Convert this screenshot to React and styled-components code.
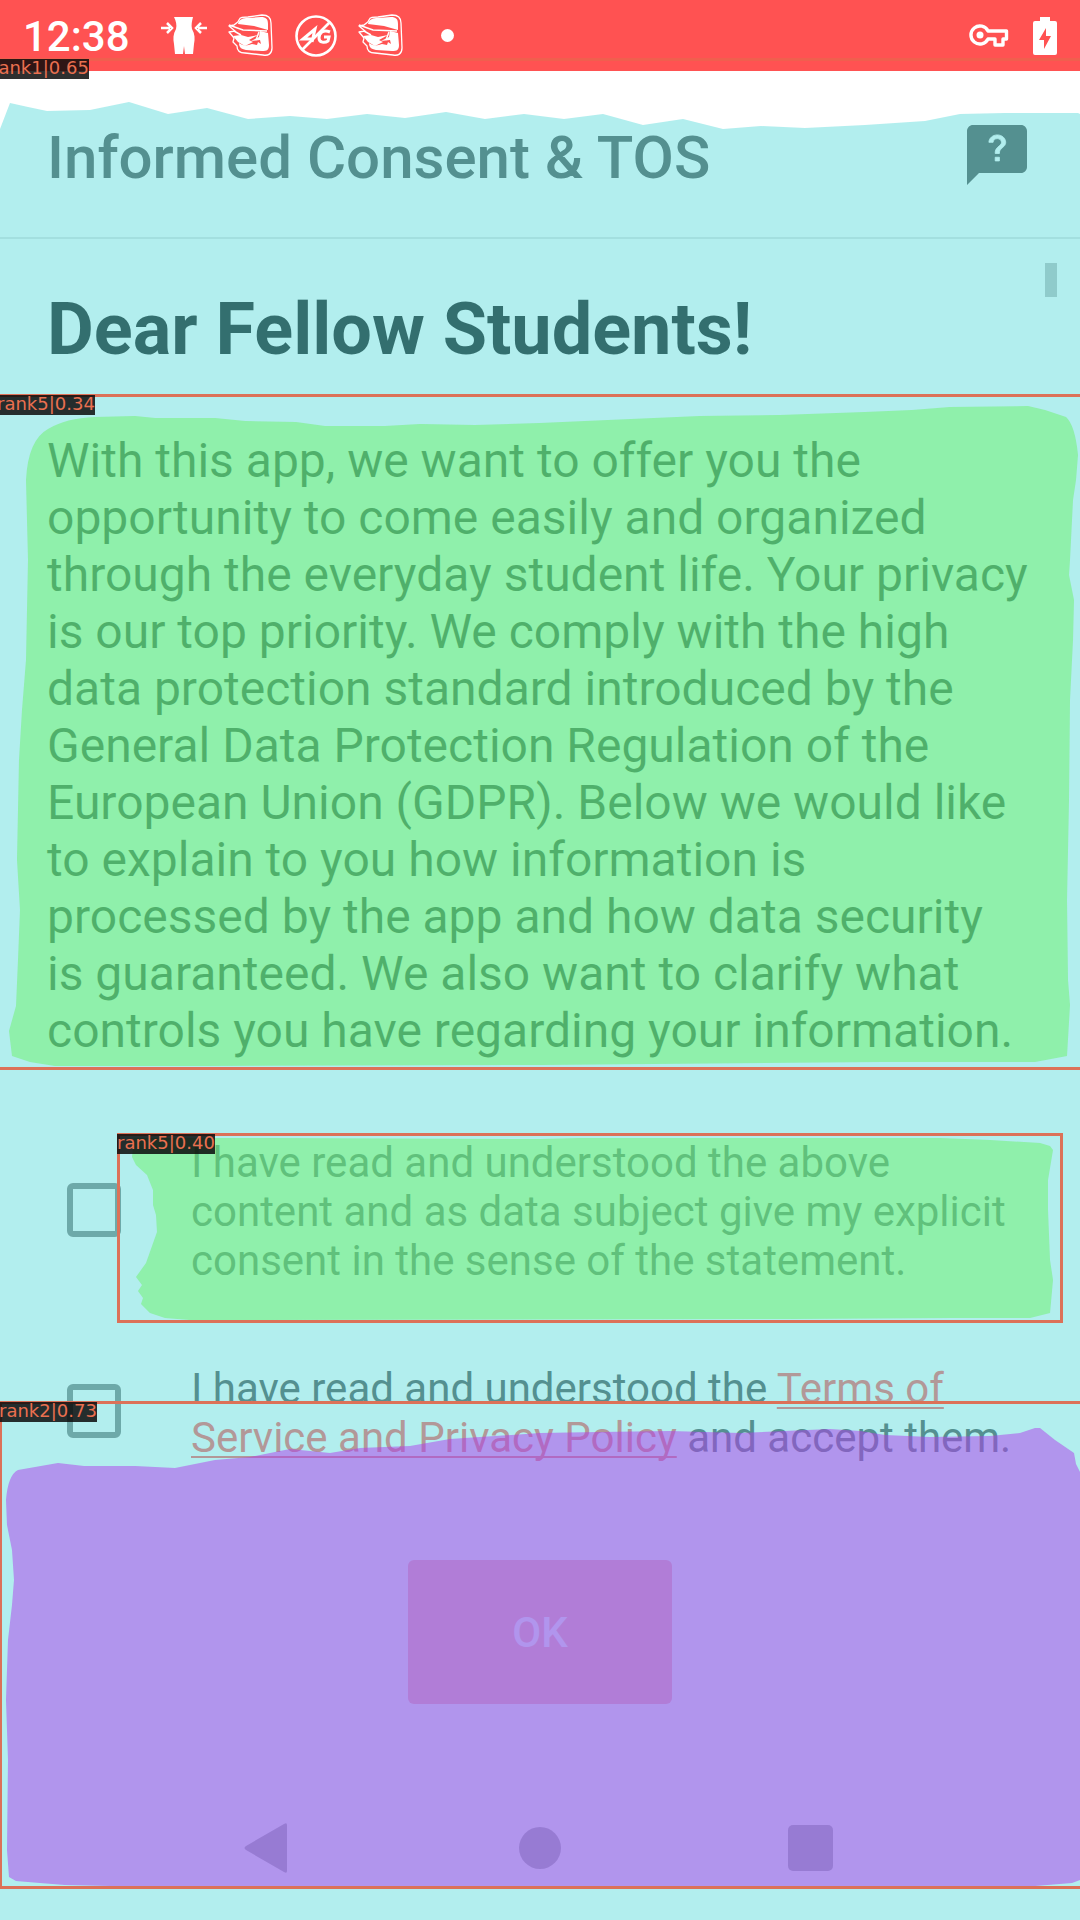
import React from "react";
import styled, { createGlobalStyle } from "styled-components";

const GlobalStyle = createGlobalStyle`
  *, *::before, *::after { box-sizing: border-box; }
  body {
    margin: 0;
    background: #ffffff;
    font-family: Roboto, "Liberation Sans", sans-serif;
  }
`;

const Screen = styled.div`
  position: relative;
  display: flex;
  flex-direction: column;
  min-height: 100vh;
  overflow: hidden;
  background: #ffffff;
`;

const StatusBar = styled.div`
  display: flex;
  align-items: center;
  justify-content: space-between;
  height: 71px;
  padding: 0 23px;
  background: #ff5252;
  color: #ffffff;
`;

const StatusGroup = styled.div`
  display: flex;
  align-items: center;
  gap: ${({ $gap }) => $gap}px;
`;

const Clock = styled.span`
  margin-right: 10px;
  padding-top: 2px;
  font-size: 42px;
  line-height: 48px;
  font-weight: 500;
`;

const MoreDot = styled.span`
  width: 13px;
  height: 13px;
  margin-left: 16px;
  border-radius: 50%;
  background: #ffffff;
`;

const Header = styled.header`
  display: flex;
  align-items: center;
  justify-content: space-between;
  height: 168px;
  padding: 2px 47px 0;
  border-bottom: 2px solid #e0e0e0;
`;

const Title = styled.h2`
  margin: 0;
  padding-top: 5px;
  font-size: 60px;
  line-height: 70px;
  font-weight: 500;
  color: #424242;
`;

const IconButton = styled.button`
  display: flex;
  padding: 0;
  border: 0;
  background: none;
  color: #424242;
`;

const Content = styled.main`
  position: relative;
  padding: 49px 47px 48px;
`;

const ScrollThumb = styled.div`
  position: absolute;
  top: 24px;
  right: 23px;
  width: 12px;
  height: 34px;
  background: #b8b8b8;
`;

const Greeting = styled.h1`
  margin: 0 0 60px;
  font-size: 72px;
  line-height: 84px;
  font-weight: 700;
  color: #000000;
`;

const Intro = styled.p`
  margin: 0 0 79px;
  padding-right: 4px;
  font-size: 48px;
  line-height: 57px;
  color: #000000;
`;

const Form = styled.form`
  display: flex;
  flex-direction: column;
  gap: 79px;
`;

const ConsentRow = styled.div`
  display: flex;
  align-items: center;
  gap: 70px;
  padding-left: 20px;
`;

const Checkbox = styled.input`
  appearance: none;
  flex: none;
  width: 54px;
  height: 54px;
  margin: 0 0 4px;
  border: 6px solid #757575;
  border-radius: 6px;
`;

const ConsentText = styled.label`
  flex: 1;
  font-size: 42px;
  line-height: 49px;
  color: #424242;
`;

const TermsLink = styled.a`
  color: #ff5252;
  text-decoration: underline;
  text-decoration-thickness: 2px;
  text-decoration-skip-ink: none;
  text-underline-offset: 4px;
`;

const SubmitButton = styled.button`
  align-self: center;
  margin-top: 19px;
  padding: 48px 104px 47px;
  border: 0;
  border-radius: 6px;
  background: #ff9fa6;
  color: #ffffff;
  font-family: inherit;
  font-size: 42px;
  line-height: 49px;
  font-weight: 500;
`;

const NavBar = styled.nav`
  display: flex;
  justify-content: center;
  gap: 120px;
  margin-top: auto;
`;

const NavButton = styled.button`
  display: flex;
  align-items: center;
  justify-content: center;
  width: 150px;
  height: 145px;
  padding: 0;
  border: 0;
  background: none;
  color: #999999;
`;

const Overlay = styled.div`
  position: absolute;
  inset: 0;
  pointer-events: none;
`;

const Masks = styled.svg`
  display: block;
  width: 100%;
  height: 100%;
`;

const Detection = styled.div`
  position: absolute;
  top: ${({ $top }) => $top}px;
  left: ${({ $left }) => $left}px;
  right: ${({ $right }) => $right}px;
  height: ${({ $height }) => $height}px;
  border: 3px solid ${({ $faint }) => ($faint ? "rgba(230, 105, 76, 0.6)" : "#dc7158")};
`;

const Tag = styled.span`
  position: absolute;
  top: -2px;
  left: -3px;
  height: 20px;
  background: rgba(10, 10, 10, 0.85);
  color: #ea7050;
  font-family: "DejaVu Sans", sans-serif;
  font-size: 18px;
  line-height: 18px;
  white-space: nowrap;
`;

const detections = [
  { tag: "rank1|0.65", top: 58, left: -9, right: -9, height: 1900, faint: true },
  { tag: "rank5|0.34", top: 394, left: -3, right: -3, height: 676 },
  { tag: "rank5|0.40", top: 1133, left: 117, right: 17, height: 190 },
  { tag: "rank2|0.73", top: 1401, left: -1, right: -3, height: 488 },
];

const masks = [
  {
    fill: "#66dedd",
    d: "M0 129L10 103L28 107L47 111L90 110L129 102L168 114L207 108L248 119L290 116L327 119L367 114L405 118L446 112L485 119L524 114L564 119L603 114L643 125L683 119L723 129L761 126L805 128L865 125L925 121L960 114L1005 113L1078 113L1080 114V1920H0Z",
  },
  {
    fill: "#6cf268",
    d: "M26 480Q28 440 48 429Q66 418 95 417L135 416L155 418L215 418L245 421L296 422L325 426L385 426L420 424L475 425L540 423L608 420L700 416L780 415L865 412L912 410L950 407L1028 406L1045 410L1066 417Q1075 425 1078 455L1076 480L1073 500L1070 560L1069 575L1074 600L1073 640L1070 700L1069 800L1067 900L1068 980L1070 1005L1067 1056L1035 1062L880 1062L540 1065L200 1066L55 1066L30 1062L12 1056L9 1031L16 1006L18 960L20 910L17 860L19 760L22 710L26 660L28 560Z",
  },
  {
    fill: "#6cf268",
    d: "M132 1157L134 1138H268L540 1139L580 1138H940L990 1140L1040 1143L1050 1146L1053 1150L1048 1180L1048 1210L1050 1260L1053 1280L1050 1313L1030 1318H950L790 1319L190 1320L165 1318L150 1313L141 1304L143 1298L138 1291L142 1285L136 1277L146 1263L157 1232L156 1215L153 1205V1190L147 1175L136 1165Z",
  },
  {
    fill: "#b03ceb",
    d: "M6 1500Q8 1475 18 1470L58 1463L84 1466H135L175 1468L215 1460L250 1457L290 1449L330 1453L360 1448L410 1446L450 1439L540 1433L600 1432L670 1431L740 1433L830 1429L860 1431L885 1435L930 1437L990 1436L1020 1433L1035 1428H1040L1055 1440L1074 1453L1076 1464L1080 1472V1880L1072 1883L1035 1886H110L65 1885L40 1883L16 1881L9 1877L7 1850L8 1760L6 1700L8 1640L12 1605L14 1580L12 1550L7 1525Z",
  },
];

const SlimBodyIcon = () => (
  <svg width="46" height="42" viewBox="0 0 46 42" fill="#fff" aria-hidden="true">
    <path d="M13 2h19c-1 4-2 8-1 12 3 5 3 10 2 15l-1 10h-8l-1-8-1 8h-8l-1-10c-1-5-1-10 2-15 1-4 0-8-2-12z" />
    <path d="M0 13h9M37 13h9M6 8l5 5-5 5M40 8l-5 5 5 5" fill="none" stroke="#fff" strokeWidth="2.500" />
  </svg>
);

const BirdIcon = () => (
  <svg width="46" height="44" viewBox="0 0 46 44" aria-hidden="true">
    <path
      d="M6 11c2-2 4-2 5-5s4-3 9-3l14-2c7 0 9 3 9 8l1 25c0 6-4 8-9 7l-18-2c-6 0-8-3-8-7l-4-4 1-4-5-6 6-1-6-5z"
      fill="none"
      stroke="#fff"
      strokeWidth="1.300"
      strokeLinejoin="round"
    />
    <path d="M10 10c1-5 5-6 10-6l13-1c5 0 7 2 7 7v6l-14-4z" fill="#fff" />
    <path
      d="M32 17l8 2 1 12c0 5-2 6-7 6l-16-1c-5-1-7-3-7-7 4 3 8 3 13 1l5 1 1-3 3 2-1-4-9 1 8-4z"
      fill="#fff"
    />
    <path d="M5 22l8-1 7 2 10-2-9 5 4 2-8 4-7-4z" fill="#fff" />
    <path d="M1 11l14 5 24 1M6 17l7 4M31 18l-3 8" fill="none" stroke="#fff" strokeWidth="1.500" />
  </svg>
);

const No4gIcon = () => (
  <svg width="42" height="44" viewBox="0 0 42 44" fill="none" stroke="#fff" aria-hidden="true">
    <circle cx="21" cy="22" r="19.500" strokeWidth="2.600" />
    <path d="M7 36L35 8" strokeWidth="2.600" />
    <path d="M17 28l3-13L8 25h11M35 18c-7-3-11 1-11 6 0 5 6 5 9 3l1-4h-5" strokeWidth="3" />
  </svg>
);

const KeyIcon = () => (
  <svg width="40" height="24" viewBox="0 0 40 24" fill="none" stroke="#fff" strokeWidth="3.400" aria-hidden="true">
    <path d="M19 7h18.500v8H34v6h-8v-6h-7A9 9 0 1 1 19 7z" strokeLinejoin="round" />
    <circle cx="11" cy="11" r="3.500" fill="#fff" stroke="none" />
  </svg>
);

const BatteryIcon = () => (
  <svg width="24" height="40" viewBox="0 0 24 40" aria-hidden="true">
    <path d="M7 1h10v4h5q2 0 2 2v30q0 2-2 2H2q-2 0-2-2V7q0-2 2-2h5z" fill="#fff" />
    <path d="M13 12v8h5l-7 13v-9H6z" fill="#ff5252" />
  </svg>
);

const HelpIcon = () => (
  <svg width="72" height="72" viewBox="0 0 24 24" fill="currentColor" aria-hidden="true">
    <path d="M20 2H4c-1.100 0-2 .9-2 2v18l4-4h14c1.100 0 2-.9 2-2V4c0-1.100-.9-2-2-2z" />
    <g transform="translate(3.700 2.200) scale(.7 .62)" fill="#fff" stroke="#fff" strokeWidth=".4">
      <path d="M13 19h-2v-2h2v2zm2.070-7.750l-.9.920C13.450 12.900 13 13.500 13 15h-2v-.5c0-1.100.45-2.100 1.170-2.830l1.240-1.260c.37-.36.59-.86.59-1.410 0-1.100-.9-2-2-2s-2 .9-2 2H8c0-2.210 1.790-4 4-4s4 1.790 4 4c0 .88-.36 1.680-.93 2.250z" />
    </g>
  </svg>
);

const NavGlyph = ({ children }) => (
  <svg width="54" height="54" viewBox="0 0 54 54" fill="currentColor" aria-hidden="true">
    {children}
  </svg>
);

export default function App() {
  return (
    <>
      <GlobalStyle />
      <Screen>
        <StatusBar>
          <StatusGroup $gap={21}>
            <Clock>12:38</Clock>
            <SlimBodyIcon />
            <BirdIcon />
            <No4gIcon />
            <BirdIcon />
            <MoreDot />
          </StatusGroup>
          <StatusGroup $gap={24}>
            <KeyIcon />
            <BatteryIcon />
          </StatusGroup>
        </StatusBar>

        <Header>
          <Title>Informed Consent &amp; TOS</Title>
          <IconButton type="button" aria-label="Help">
            <HelpIcon />
          </IconButton>
        </Header>

        <Content>
          <ScrollThumb />
          <Greeting>Dear Fellow Students!</Greeting>
          <Intro>
            With this app, we want to offer you the opportunity to come easily and organized through
            the everyday student life. Your privacy is our top priority. We comply with the high
            data protection standard introduced by the General Data Protection Regulation of the
            European Union (GDPR). Below we would like to explain to you how information is
            processed by the app and how data security is guaranteed. We also want to clarify what
            controls you have regarding your information.
          </Intro>
          <Form>
            <ConsentRow>
              <Checkbox type="checkbox" id="consent" />
              <ConsentText htmlFor="consent">
                I have read and understood the above content and as data subject give my explicit
                consent in the sense of the statement.
              </ConsentText>
            </ConsentRow>
            <ConsentRow>
              <Checkbox type="checkbox" id="terms" />
              <ConsentText htmlFor="terms">
                I have read and understood the{" "}
                <TermsLink href="#terms">Terms of Service and Privacy Policy</TermsLink> and accept
                them.
              </ConsentText>
            </ConsentRow>
            <SubmitButton type="button">OK</SubmitButton>
          </Form>
        </Content>

        <NavBar>
          <NavButton type="button" aria-label="Back">
            <NavGlyph>
              <path d="M44 4v46q0 3-3 1L3 29q-3-2 0-4L41 3q3-2 3 1z" />
            </NavGlyph>
          </NavButton>
          <NavButton type="button" aria-label="Home">
            <NavGlyph>
              <circle cx="27" cy="27" r="21" />
            </NavGlyph>
          </NavButton>
          <NavButton type="button" aria-label="Recent apps">
            <NavGlyph>
              <rect x="5" y="4" width="45" height="46" rx="5" />
            </NavGlyph>
          </NavButton>
        </NavBar>

        <Overlay>
          <Masks viewBox="0 0 1080 1920" preserveAspectRatio="none" aria-hidden="true">
            {masks.map(({ d, fill }) => (
              <path key={d} d={d} fill={fill} fillOpacity="0.5" />
            ))}
          </Masks>
          {detections.map(({ tag, top, left, right, height, faint }) => (
            <Detection key={tag} $top={top} $left={left} $right={right} $height={height} $faint={faint}>
              <Tag>{tag}</Tag>
            </Detection>
          ))}
        </Overlay>
      </Screen>
    </>
  );
}
